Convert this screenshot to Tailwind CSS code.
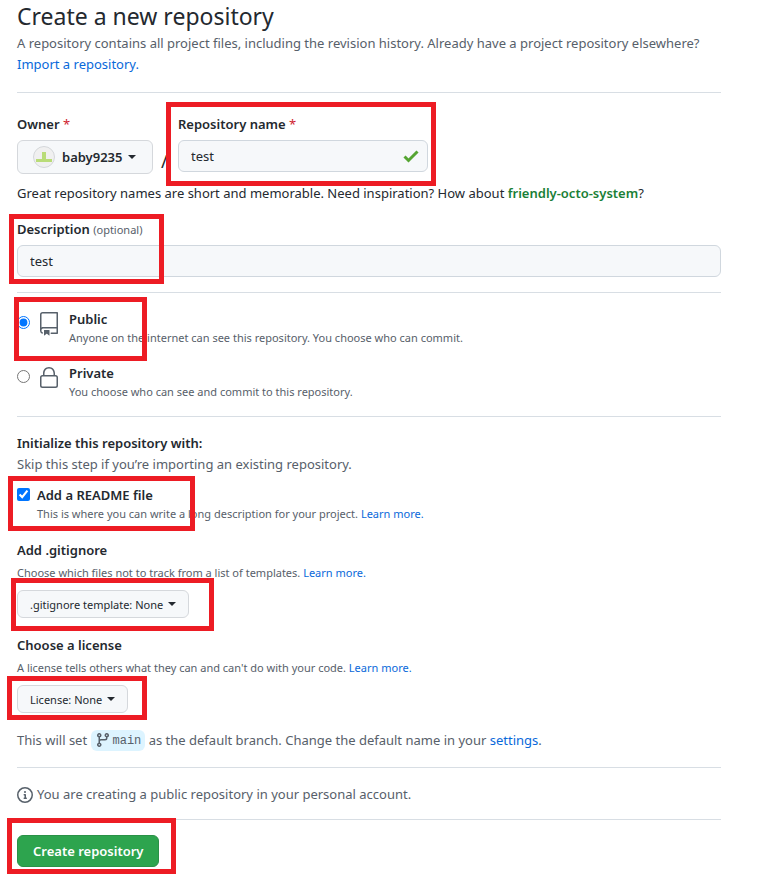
<!DOCTYPE html>
<html lang="en">
<head>
    <meta charset="UTF-8">
    <meta name="viewport" content="width=device-width, initial-scale=1.0">
    <title>Create a new repository</title>
    <script src="https://cdn.jsdelivr.net/npm/@tailwindcss/browser@4"></script>
</head>

<body class="bg-white font-['Noto_Sans','Noto_Sans_CJK_KR',sans-serif] text-[13px] leading-[21px] text-[#24292f]">
    <main class="pl-[17px] pr-[42px] pb-2">

        <!-- Header -->
        <header class="border-b border-[#d8dee4] pb-[17px]">
            <h1 class="text-[23px] leading-8 mb-px">Create a new repository</h1>
            <p class="text-[#57606a]">A repository contains all project files, including the revision history. Already have a project repository elsewhere?<br>
                <a href="#" class="text-[#0969da]">Import a repository.</a>
            </p>
        </header>

        <form>
            <!-- Owner / name -->
            <div class="flex mt-[21px]">
                <div>
                    <label for="owner" class="block font-semibold mb-[5px]">Owner <span class="font-normal text-[#cf222e]">*</span></label>
                    <div class="relative flex items-center h-[34px] border border-[#d5d8dc] rounded-md bg-[#f6f8fa]">
                        <svg class="absolute left-[15px] w-[22px] h-[22px] pointer-events-none" viewBox="0 0 22 22">
                            <circle cx="11" cy="11" r="10.5" fill="#f0f0f0" stroke="#d4d7da" />
                            <path d="M9 6h4v7h6v3H3v-3h6z" fill="#b9dc78" />
                        </svg>
                        <select id="owner" class="appearance-none bg-transparent font-semibold pl-11 pr-[29px] h-8">
                            <option>baby9235</option>
                        </select>
                        <svg class="absolute right-4 w-2 h-1 pointer-events-none" viewBox="0 0 8 4"><path d="M0 0h8L4 4z" fill="#24292f" /></svg>
                    </div>
                </div>
                <span class="w-[25px] pt-[37px] pl-2 text-lg leading-5">/</span>
                <div class="relative">
                    <label for="repo-name" class="block font-semibold mb-[5px]">Repository name <span class="font-normal text-[#cf222e]">*</span></label>
                    <input id="repo-name" type="text" value="test" class="block w-[250px] h-8 px-3 border border-[#d0d7de] rounded-md bg-[#f6f8fa]">
                    <svg class="absolute right-2 bottom-[9px] w-[18px] h-[18px] pointer-events-none" viewBox="0 0 18 18"><path d="M2.5 9.5 6.5 13.5 15.5 4.5" fill="none" stroke="#55a532" stroke-width="3" /></svg>
                    <span class="absolute -left-3 -right-2 -top-3 -bottom-3 border-5 border-[#ed1c24] pointer-events-none"></span>
                </div>
            </div>
            <p class="mt-[9px]">Great repository names are short and memorable. Need inspiration? How about <strong class="font-semibold text-[#1a7f37]">friendly-octo-system</strong>?</p>

            <!-- Description -->
            <div class="relative mt-[15px]">
                <label for="description" class="block font-semibold mb-[5px]">Description <span class="text-[11px] font-normal text-[#57606a]">(optional)</span></label>
                <input id="description" type="text" value="test" class="block w-full h-8 px-3 border border-[#d0d7de] rounded-md bg-[#f6f8fa]">
                <span class="absolute -left-2 w-[155px] -top-[5px] -bottom-[7px] border-5 border-[#ed1c24] pointer-events-none"></span>
            </div>

            <!-- Visibility -->
            <div class="mt-[15px] border-t border-[#d8dee4] pt-4">
                <div class="relative flex items-start">
                    <input type="radio" id="public" name="visibility" checked class="w-[13px] h-[13px] mt-[7px] accent-[#0075ff]">
                    <svg class="w-6 h-6 mt-[3px] ml-[7px] mr-2" viewBox="0 0 24 24" fill="#57606a"><path fill-rule="evenodd" d="M3 2.75A2.75 2.75 0 0 1 5.75 0h14.5a.75.75 0 0 1 .75.75v20.5a.75.75 0 0 1-.75.75h-6a.75.75 0 0 1 0-1.5h5.25v-4H6A1.5 1.5 0 0 0 4.5 18v.75c0 .716.43 1.334 1.05 1.605a.75.75 0 0 1-.6 1.374A3.25 3.25 0 0 1 3 18.75zM19.5 1.5V15H6c-.546 0-1.059.146-1.5.401V2.75c0-.69.56-1.25 1.25-1.25z" /><path d="M7 18.25a.25.25 0 0 1 .25-.25h5a.25.25 0 0 1 .25.25v5.01a.25.25 0 0 1-.397.201l-2.206-1.604a.25.25 0 0 0-.294 0L7.397 23.46a.25.25 0 0 1-.397-.2z" /></svg>
                    <label for="public">
                        <span class="block font-semibold leading-5">Public</span>
                        <span class="block text-[11px] leading-[18px] text-[#57606a]">Anyone on the internet can see this repository. You choose who can commit.</span>
                    </label>
                    <span class="absolute -left-[3px] w-[133px] -top-3 h-16 border-5 border-[#ed1c24] pointer-events-none"></span>
                </div>
                <div class="flex items-start mt-4">
                    <input type="radio" id="private" name="visibility" class="w-[13px] h-[13px] mt-[7px]">
                    <svg class="w-6 h-6 mt-[3px] ml-[7px] mr-2" viewBox="0 0 24 24" fill="#57606a"><path fill-rule="evenodd" d="M6 9V7.25C6 3.845 8.503 1 12 1s6 2.845 6 6.25V9h.5a2.5 2.5 0 0 1 2.5 2.5v8a2.5 2.5 0 0 1-2.5 2.5h-13A2.5 2.5 0 0 1 3 19.5v-8A2.5 2.5 0 0 1 5.5 9zm1.5-1.75C7.5 4.58 9.422 2.5 12 2.5s4.5 2.08 4.5 4.75V9h-9zm-3 4.25a1 1 0 0 1 1-1h13a1 1 0 0 1 1 1v8a1 1 0 0 1-1 1h-13a1 1 0 0 1-1-1z" /></svg>
                    <label for="private">
                        <span class="block font-semibold leading-5">Private</span>
                        <span class="block text-[11px] leading-[18px] text-[#57606a]">You choose who can see and commit to this repository.</span>
                    </label>
                </div>
            </div>

            <!-- Initialize -->
            <div class="mt-[15px] border-t border-[#d8dee4] pt-4">
                <h2 class="font-semibold">Initialize this repository with:</h2>
                <p class="text-[#57606a]">Skip this step if you’re importing an existing repository.</p>

                <div class="relative flex items-start mt-[10px]">
                    <input type="checkbox" id="readme" checked class="w-[13px] h-[13px] mt-[3px] mr-[7px] accent-[#0075ff]">
                    <div>
                        <label for="readme" class="block font-semibold leading-5">Add a README file</label>
                        <p class="text-[11px] leading-[18px] text-[#57606a]">This is where you can write a long description for your project. <a href="#" class="text-[#0969da]">Learn more.</a></p>
                    </div>
                    <span class="absolute -left-[9px] w-[187px] -top-[9px] h-[55px] border-5 border-[#ed1c24] pointer-events-none"></span>
                </div>
            </div>

            <!-- .gitignore -->
            <div class="mt-[17px]">
                <label for="gitignore" class="block font-semibold">Add .gitignore</label>
                <p class="text-[11px] leading-[18px] mt-[3px] mb-2 text-[#57606a]">Choose which files not to track from a list of templates. <a href="#" class="text-[#0969da]">Learn more.</a></p>
                <div class="relative flex items-center w-fit border border-[#d5d8dc] rounded-md bg-[#f6f8fa]">
                    <select id="gitignore" class="appearance-none bg-transparent text-[11px] pl-3 pr-6 h-[26px]">
                        <option>.gitignore template: None</option>
                    </select>
                    <svg class="absolute right-3 w-2 h-1 pointer-events-none" viewBox="0 0 8 4"><path d="M0 0h8L4 4z" fill="#24292f" /></svg>
                    <span class="absolute -left-[7px] w-[203px] -top-[13px] h-[53px] border-5 border-[#ed1c24] pointer-events-none"></span>
                </div>
            </div>

            <!-- License -->
            <div class="mt-[17px]">
                <label for="license" class="block font-semibold">Choose a license</label>
                <p class="text-[11px] leading-[18px] mt-[3px] mb-2 text-[#57606a]">A license tells others what they can and can't do with your code. <a href="#" class="text-[#0969da]">Learn more.</a></p>
                <div class="relative flex items-center w-fit border border-[#d5d8dc] rounded-md bg-[#f6f8fa]">
                    <select id="license" class="appearance-none bg-transparent text-[11px] pl-3 pr-6 h-[26px]">
                        <option>License: None</option>
                    </select>
                    <svg class="absolute right-3 w-2 h-1 pointer-events-none" viewBox="0 0 8 4"><path d="M0 0h8L4 4z" fill="#24292f" /></svg>
                    <span class="absolute -left-[11px] w-[140px] -top-[10px] h-[44px] border-5 border-[#ed1c24] pointer-events-none"></span>
                </div>
            </div>

            <p class="mt-[17px] pb-4 border-b border-[#d8dee4] text-[#57606a]">This will set
                <span class="inline-flex items-center h-[21px] px-1 rounded-md bg-[#ddf4ff] align-top font-['Liberation_Mono',monospace] text-xs"><svg class="w-4 h-4 mr-0.5 mb-0.5" viewBox="0 0 16 16" fill="#57606a"><path fill-rule="evenodd" d="M11.75 2.5a.75.75 0 1 0 0 1.5.75.75 0 0 0 0-1.5m-2.25.75a2.25 2.25 0 1 1 3 2.122V6A2.5 2.5 0 0 1 10 8.5H6a1 1 0 0 0-1 1v1.128a2.251 2.251 0 1 1-1.5 0V5.372a2.25 2.25 0 1 1 1.5 0v1.836A2.492 2.492 0 0 1 6 7h4a1 1 0 0 0 1-1v-.628A2.25 2.25 0 0 1 9.5 3.25M4.25 12a.75.75 0 1 0 0 1.5.75.75 0 0 0 0-1.5M3.5 3.25a.75.75 0 1 1 1.5 0 .75.75 0 0 1-1.5 0" /></svg>main</span>
                as the default branch. Change the default name in your <a href="#" class="text-[#0969da]">settings</a>.</p>

            <p class="flex items-center gap-1 pt-4 pb-[14px] border-b border-[#d8dee4] text-[#57606a]">
                <svg class="w-4 h-4" viewBox="0 0 16 16" fill="#57606a"><path fill-rule="evenodd" d="M8 1.5a6.5 6.5 0 1 0 0 13 6.5 6.5 0 0 0 0-13M0 8a8 8 0 1 1 16 0A8 8 0 0 1 0 8m6.5-.25A.75.75 0 0 1 7.25 7h1a.75.75 0 0 1 .75.75v2.75h.25a.75.75 0 0 1 0 1.5h-2a.75.75 0 0 1 0-1.5h.25v-2h-.25a.75.75 0 0 1-.75-.75M8 6a1 1 0 1 0 0-2 1 1 0 0 0 0 2" /></svg>
                You are creating a public repository in your personal account.
            </p>

            <div class="relative w-fit mt-[15px]">
                <button type="submit" class="block h-8 px-[15px] border border-[#2a9147] rounded-md bg-[#2da44e] text-white font-semibold">Create repository</button>
                <span class="absolute -left-[10px] -right-[17px] -top-[17px] -bottom-[7px] border-5 border-[#ed1c24] pointer-events-none"></span>
            </div>
        </form>
    </main>
</body>

</html>
